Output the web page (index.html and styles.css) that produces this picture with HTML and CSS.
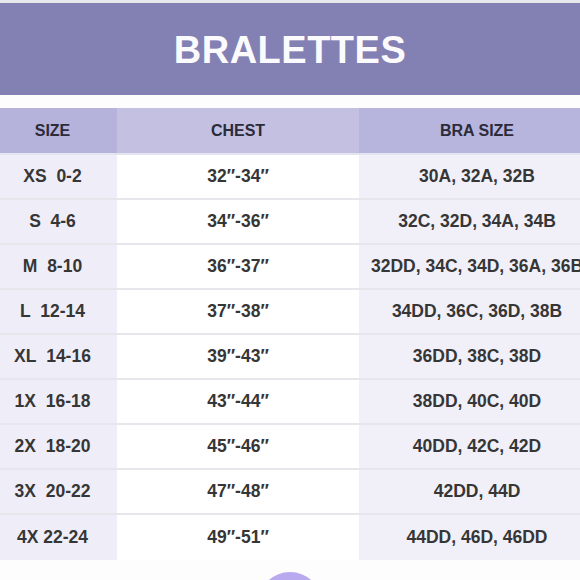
FILE: index.html
```html
<!DOCTYPE html>
<html>
<head>
<meta charset="utf-8">
<link rel="stylesheet" href="styles.css">
</head>
<body>
<div class="page">
  <div class="topline"></div>
  <div class="band"><h1 class="title">BRALETTES</h1></div>
  <div class="table">
    <div class="th c1">SIZE</div>
    <div class="th c2">CHEST</div>
    <div class="th c3">BRA SIZE</div>

    <div class="td c1">XS&nbsp; 0-2</div>
    <div class="td c2">32″-34″</div>
    <div class="td c3">30A, 32A, 32B</div>

    <div class="td c1">S&nbsp; 4-6</div>
    <div class="td c2">34″-36″</div>
    <div class="td c3">32C, 32D, 34A, 34B</div>

    <div class="td c1">M&nbsp; 8-10</div>
    <div class="td c2">36″-37″</div>
    <div class="td c3">32DD, 34C, 34D, 36A, 36B</div>

    <div class="td c1">L&nbsp; 12-14</div>
    <div class="td c2">37″-38″</div>
    <div class="td c3">34DD, 36C, 36D, 38B</div>

    <div class="td c1">XL&nbsp; 14-16</div>
    <div class="td c2">39″-43″</div>
    <div class="td c3">36DD, 38C, 38D</div>

    <div class="td c1">1X&nbsp; 16-18</div>
    <div class="td c2">43″-44″</div>
    <div class="td c3">38DD, 40C, 40D</div>

    <div class="td c1">2X&nbsp; 18-20</div>
    <div class="td c2">45″-46″</div>
    <div class="td c3">40DD, 42C, 42D</div>

    <div class="td c1">3X&nbsp; 20-22</div>
    <div class="td c2">47″-48″</div>
    <div class="td c3">42DD, 44D</div>

    <div class="td c1 last">4X 22-24</div>
    <div class="td c2 last">49″-51″</div>
    <div class="td c3 last">44DD, 46D, 46DD</div>
  </div>
  <div class="circle"></div>
</div>
</body>
</html>
```
FILE: styles.css
```css
html, body {
  margin: 0;
  padding: 0;
  background: #fdfdfd;
  overflow: hidden;
}
.page {
  width: 580px;
  height: 580px;
  overflow: hidden;
  font-family: "Liberation Sans", Arial, sans-serif;
  display: flex;
  flex-direction: column;
  align-items: flex-start;
}
.page > * {
  flex-shrink: 0;
}
.topline {
  width: 580px;
  height: 3px;
  background: #e7e7ee;
}
.band {
  width: 580px;
  height: 92px;
  background: #8380b4;
  display: flex;
  align-items: center;
  justify-content: center;
}
.title {
  margin: 0;
  color: #fbfbfd;
  font-size: 38px;
  font-weight: 700;
  letter-spacing: 0.5px;
  padding-top: 2px;
}
.table {
  margin-top: 13px;
  margin-left: -14px;
  width: 609px;
  display: grid;
  grid-template-columns: 131px 242px 236px;
  grid-template-rows: 47px repeat(9, 45px);
}
.th {
  display: flex;
  align-items: center;
  justify-content: center;
  font-size: 16px;
  font-weight: 700;
  color: #2b2b3a;
  border-bottom: 2px solid #e4e3f0;
}
.th.c1 { background: #b5b2dc; padding-left: 2px; }
.th.c2 { background: #c3c0e2; }
.th.c3 { background: #b7b4dd; }
.td {
  display: flex;
  align-items: center;
  justify-content: center;
  font-size: 17.5px;
  font-weight: 700;
  color: #363636;
  white-space: nowrap;
  border-bottom: 2px solid #e6e6ec;
}
.td.c1 { background: #efeef8; padding-left: 2px; }
.td.c2 { background: #ffffff; }
.td.c3 { background: #f1f0f9; }
.td.last { border-bottom: none; }
.circle {
  align-self: center;
  margin-top: 12px;
  width: 64px;
  height: 64px;
  border-radius: 50%;
  background: #b9aaf0;
}
```
